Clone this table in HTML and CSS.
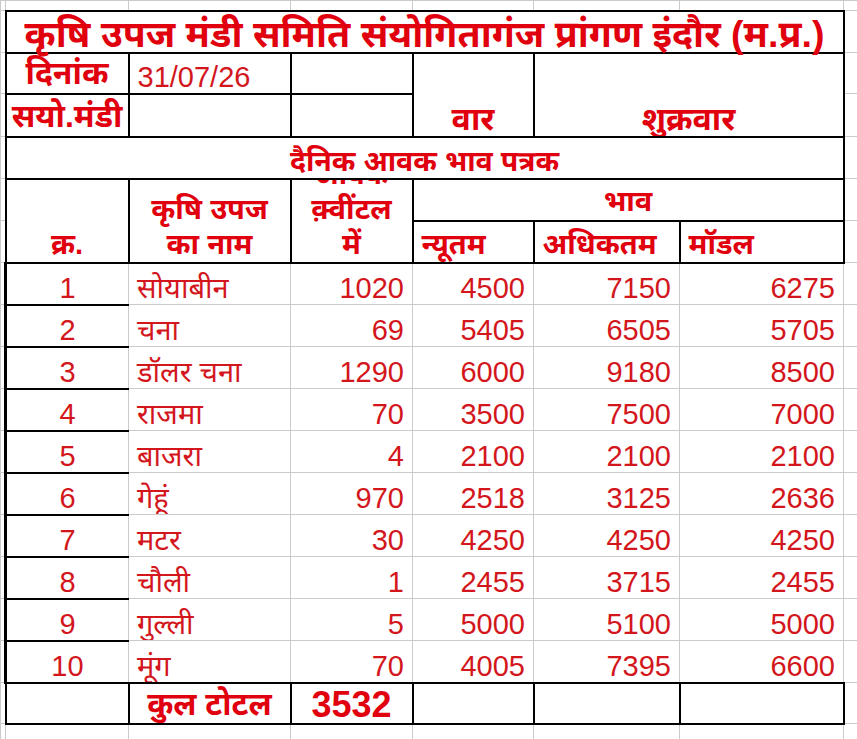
FILE: index.html
```html
<!DOCTYPE html>
<html lang="hi">
<head>
<meta charset="utf-8">
<title>कृषि उपज मंडी समिति संयोगितागंज</title>
<link rel="stylesheet" href="styles.css">
</head>
<body>
<table class="sheet">
  <colgroup>
    <col class="c-edge-l">
    <col class="c1">
    <col class="c2">
    <col class="c3">
    <col class="c4">
    <col class="c5">
    <col class="c6">
    <col class="c-edge-r">
  </colgroup>
  <tr class="r-top">
    <td></td><td></td><td></td><td></td><td></td><td></td><td></td><td></td>
  </tr>
  <tr class="r-title">
    <td></td>
    <td colspan="6" class="blk title">कृषि उपज मंडी समिति संयोगितागंज प्रांगण इंदौर (म.प्र.)</td>
    <td></td>
  </tr>
  <tr class="r-info1">
    <td></td>
    <td class="blk info ctr">दिनांक</td>
    <td class="blk date">31/07/26</td>
    <td class="blk"></td>
    <td rowspan="2" class="blk info day ctr">वार</td>
    <td rowspan="2" colspan="2" class="blk info day ctr">शुक्रवार</td>
    <td></td>
  </tr>
  <tr class="r-info2">
    <td></td>
    <td class="blk info ctr tight">सयो.मंडी</td>
    <td class="blk"></td>
    <td class="blk"></td>
    <td></td>
  </tr>
  <tr class="r-sub">
    <td></td>
    <td colspan="6" class="blk sub ctr">दैनिक आवक भाव पत्रक</td>
    <td></td>
  </tr>
  <tr class="r-head1">
    <td></td>
    <td rowspan="2" class="blk hd ctr">क्र.</td>
    <td rowspan="2" class="blk hd multi"><div class="clip"><span>कृषि उपज</span><span>का नाम</span></div></td>
    <td rowspan="2" class="blk hd multi"><div class="clip"><span>आवक</span><span>क़्वींटल</span><span>में</span></div></td>
    <td colspan="3" class="blk hd bhav ctr">भाव</td>
    <td></td>
  </tr>
  <tr class="r-head2">
    <td></td>
    <td class="blk hd lft">न्यूतम</td>
    <td class="blk hd lft">अधिकतम</td>
    <td class="blk hd lft">मॉडल</td>
    <td></td>
  </tr>
  <tr class="r-data"><td></td><td class="sn">1</td><td class="nm">सोयाबीन</td><td class="num">1020</td><td class="num">4500</td><td class="num">7150</td><td class="num">6275</td><td></td></tr>
  <tr class="r-data"><td></td><td class="sn">2</td><td class="nm">चना</td><td class="num">69</td><td class="num">5405</td><td class="num">6505</td><td class="num">5705</td><td></td></tr>
  <tr class="r-data"><td></td><td class="sn">3</td><td class="nm">डॉलर चना</td><td class="num">1290</td><td class="num">6000</td><td class="num">9180</td><td class="num">8500</td><td></td></tr>
  <tr class="r-data"><td></td><td class="sn">4</td><td class="nm">राजमा</td><td class="num">70</td><td class="num">3500</td><td class="num">7500</td><td class="num">7000</td><td></td></tr>
  <tr class="r-data"><td></td><td class="sn">5</td><td class="nm">बाजरा</td><td class="num">4</td><td class="num">2100</td><td class="num">2100</td><td class="num">2100</td><td></td></tr>
  <tr class="r-data"><td></td><td class="sn">6</td><td class="nm">गेहूं</td><td class="num">970</td><td class="num">2518</td><td class="num">3125</td><td class="num">2636</td><td></td></tr>
  <tr class="r-data"><td></td><td class="sn">7</td><td class="nm">मटर</td><td class="num">30</td><td class="num">4250</td><td class="num">4250</td><td class="num">4250</td><td></td></tr>
  <tr class="r-data"><td></td><td class="sn">8</td><td class="nm">चौली</td><td class="num">1</td><td class="num">2455</td><td class="num">3715</td><td class="num">2455</td><td></td></tr>
  <tr class="r-data"><td></td><td class="sn">9</td><td class="nm">गुल्ली</td><td class="num">5</td><td class="num">5000</td><td class="num">5100</td><td class="num">5000</td><td></td></tr>
  <tr class="r-data"><td></td><td class="sn">10</td><td class="nm">मूंग</td><td class="num">70</td><td class="num">4005</td><td class="num">7395</td><td class="num">6600</td><td></td></tr>
  <tr class="r-total">
    <td></td>
    <td class="blk"></td>
    <td class="blk hd tot ctr">कुल टोटल</td>
    <td class="blk big ctr">3532</td>
    <td class="blk"></td>
    <td class="blk"></td>
    <td class="blk"></td>
    <td></td>
  </tr>
  <tr class="r-bottom">
    <td></td><td></td><td></td><td></td><td></td><td></td><td></td><td></td>
  </tr>
</table>
</body>
</html>
```

FILE: styles.css
```css
html, body {
  margin: 0;
  padding: 0;
  background: #ffffff;
}

.sheet {
  border-collapse: collapse;
  table-layout: fixed;
  width: 857px;
  font-family: "Liberation Sans", "Noto Sans Devanagari", "Lohit Devanagari", "FreeSans", "Noto Sans", sans-serif;
  color: #d3161c;
  font-size: 29px;
}

.c-edge-l { width: 5px; }
.c1 { width: 123px; }
.c2 { width: 162px; }
.c3 { width: 122px; }
.c4 { width: 121px; }
.c5 { width: 146px; }
.c6 { width: 164px; }
.c-edge-r { width: 14px; }

.sheet td {
  box-sizing: border-box;
  border: 1px solid #cbcbcb;
  padding: 0 8px 6px 8px;
  white-space: nowrap;
  overflow: hidden;
  vertical-align: bottom;
  line-height: 20px;
}

.r-top td { height: 10px; padding: 0; }
.r-title td { height: 42px; }
.r-info1 td { height: 41px; }
.r-info2 td { height: 43px; }
.r-sub td { height: 42px; }
.r-head1 td { height: 42px; }
.r-head2 td { height: 42px; }
.r-data td { height: 42px; }
.r-total td { height: 41px; }
.r-bottom td { height: 17px; padding: 0; }

.sheet .blk {
  border: 2px solid #000;
}

.title {
  text-align: center;
  font-weight: bold;
  font-size: 37.5px;
  color: #e0000e;
}

.sheet td.title {
  padding: 0 0 8px 0;
  overflow: visible;
}

.info {
  font-weight: bold;
  color: #e0000e;
  font-size: 32px;
}

.sheet td.info { padding-bottom: 10px; }
.sheet td.day { padding-bottom: 7px; }

.sub {
  font-weight: bold;
  color: #e0000e;
  font-size: 28.5px;
}

.sheet td.sub { padding-bottom: 7px; }

.hd {
  font-weight: bold;
  color: #e0000e;
  font-size: 29px;
}

.sheet td.hd { padding-bottom: 8px; }
.sheet td.bhav { padding-bottom: 9px; }
.sheet td.tot { padding: 0 2px 9px 2px; font-size: 31.5px; }

.ctr { text-align: center; }
.lft { text-align: left; }

.sheet td.tight {
  padding-left: 2px;
  padding-right: 2px;
}

.date {
  text-align: left;
}

.sheet td.multi {
  padding: 0 4px;
}

.clip {
  display: flex;
  flex-direction: column;
  justify-content: flex-end;
  align-items: center;
  gap: 15px;
  height: 82px;
  box-sizing: border-box;
  padding-bottom: 8px;
  overflow: hidden;
}

.clip span {
  display: block;
  line-height: 20px;
}

.sheet td.sn {
  text-align: center;
  border-left: 3px solid #000;
  border-top: 2px solid #000;
  border-bottom: 2px solid #000;
}

.nm {
  text-align: left;
}

.num {
  text-align: right;
}

.big {
  font-weight: bold;
  font-size: 36px;
  color: #e0000e;
}

.sheet td.big { padding: 0 2px 4px 2px; line-height: 28px; }
```
